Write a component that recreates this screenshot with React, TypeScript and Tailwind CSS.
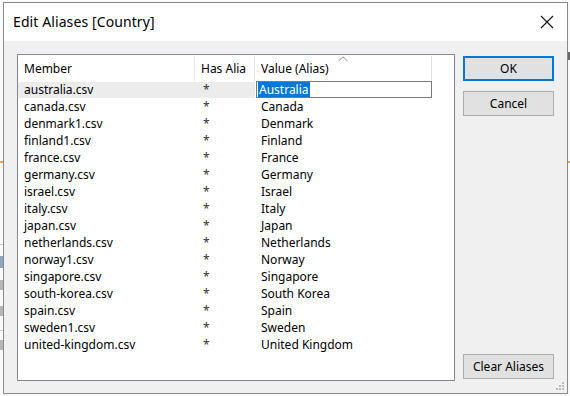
import React from "react";

const rows: [string, string][] = [
  ["australia.csv", "Australia"],
  ["canada.csv", "Canada"],
  ["denmark1.csv", "Denmark"],
  ["finland1.csv", "Finland"],
  ["france.csv", "France"],
  ["germany.csv", "Germany"],
  ["israel.csv", "Israel"],
  ["italy.csv", "Italy"],
  ["japan.csv", "Japan"],
  ["netherlands.csv", "Netherlands"],
  ["norway1.csv", "Norway"],
  ["singapore.csv", "Singapore"],
  ["south-korea.csv", "South Korea"],
  ["spain.csv", "Spain"],
  ["sweden1.csv", "Sweden"],
  ["united-kingdom.csv", "United Kingdom"],
];

export default function App() {
  return (
    <div
      className="relative w-[570px] h-[396px] overflow-hidden bg-[#fafafa] pt-[2px] pl-[3px] text-[#000]"
      style={{ fontFamily: '"Noto Sans", "Open Sans", sans-serif' }}
    >
      {/* background hints behind dialog edges */}
      <div className="absolute left-0 top-[161px] w-[3px] h-[2px] bg-[#e8a060]" />
      <div className="absolute left-0 top-[244px] w-[3px] h-[1px] bg-[#c8c8c8]" />
      <div className="absolute left-0 top-[256px] w-[3px] h-[12px] bg-[#4a6a9a] opacity-60" />
      <div className="absolute left-0 top-[280px] w-[3px] h-[10px] bg-[#888] opacity-60" />
      <div className="absolute left-0 top-[306px] w-[3px] h-[10px] bg-[#888] opacity-60" />
      <div className="absolute left-0 top-[330px] w-[3px] h-[1px] bg-[#c8c8c8]" />
      <div className="absolute left-0 top-[340px] w-[3px] h-[10px] bg-[#888] opacity-60" />
      <div className="absolute right-0 top-[52px] w-[2px] h-[8px] bg-[#666]" />
      <div className="absolute right-0 top-[161px] w-[2px] h-[2px] bg-[#e8a060]" />

      <div className="w-[565px] h-[392px] border border-[#8a8a8a] flex flex-col">
        {/* title bar */}
        <div className="h-[38px] bg-white flex items-center justify-between pl-[9px] pr-[12px] shrink-0">
          <span className="text-[14px] leading-[20px] tracking-[0.1px]">Edit Aliases [Country]</span>
          <svg width="14" height="14" viewBox="0 0 14 14" className="mr-[1px]">
            <path d="M1 1 L13 13 M13 1 L1 13" stroke="#111" strokeWidth="1.1" fill="none" />
          </svg>
        </div>

        {/* body */}
        <div className="relative flex-1 bg-[#f0f0f0] flex pt-[13px] pl-[13px] text-[12px]">
          {/* list view */}
          <div className="w-[438px] h-[327px] border border-[#828790] bg-white flex flex-col">
            {/* header */}
            <div className="relative h-[26px] flex items-stretch shrink-0 pt-[1px]">
              <div className="w-[177px] border-r border-[#e5e5e5] flex items-center pl-[6px]">Member</div>
              <div className="w-[60px] border-r border-[#e5e5e5] flex items-center pl-[6px] whitespace-nowrap">
                Has Alia
              </div>
              <div className="relative w-[177px] border-r border-[#e5e5e5] flex items-center pl-[6px]">
                Value (Alias)
                <svg width="10" height="6" viewBox="0 0 10 6" className="absolute left-[83px] top-[0px]">
                  <path d="M0.5 5 L5 0.8 L9.5 5" stroke="#8a8a8a" strokeWidth="1" fill="none" />
                </svg>
              </div>
            </div>
            {/* rows */}
            {rows.map(([m, v], i) => (
              <div key={m} className="h-[17px] flex items-center whitespace-nowrap pt-[1px]">
                <div className={`w-[237px] h-full flex items-center ${i === 0 ? "bg-[#ececec] -mt-[1px] pt-[1px]" : ""}`}>
                  <div className="w-[177px] pl-[6px]">{m}</div>
                  <div className="w-[60px] pl-[8px] text-[#333]">*</div>
                </div>
                {i === 0 ? (
                  <div className="ml-[1px] -mt-[1px] w-[176px] h-[17px] border border-[#7a7a7a] bg-white flex items-center pl-[1px]">
                    <span className="bg-[#0078d7] text-white leading-[15px] px-[1px]">{v}</span>
                  </div>
                ) : (
                  <div className="pl-[6px]">{v}</div>
                )}
              </div>
            ))}
          </div>

          {/* buttons */}
          <div className="ml-[8px] w-[91px] h-[327px] flex flex-col">
            <div className="mt-[2px] h-[25px] border-2 border-[#0078d7] bg-[#e1e1e1] flex items-center justify-center">
              OK
            </div>
            <div className="mt-[10px] h-[25px] border border-[#adadad] bg-[#e1e1e1] flex items-center justify-center">
              Cancel
            </div>
            <div className="mt-auto mb-[2px] h-[25px] border border-[#adadad] bg-[#e1e1e1] flex items-center justify-center">
              Clear Aliases
            </div>
          </div>

          {/* size grip */}
          <svg width="10" height="10" viewBox="0 0 10 10" className="absolute right-[2px] bottom-[2px]">
            <rect x="7" y="1" width="2" height="2" fill="#bcbcbc" />
            <rect x="4" y="4" width="2" height="2" fill="#bcbcbc" />
            <rect x="7" y="4" width="2" height="2" fill="#bcbcbc" />
            <rect x="1" y="7" width="2" height="2" fill="#bcbcbc" />
            <rect x="4" y="7" width="2" height="2" fill="#bcbcbc" />
            <rect x="7" y="7" width="2" height="2" fill="#bcbcbc" />
          </svg>
        </div>
      </div>
    </div>
  );
}
